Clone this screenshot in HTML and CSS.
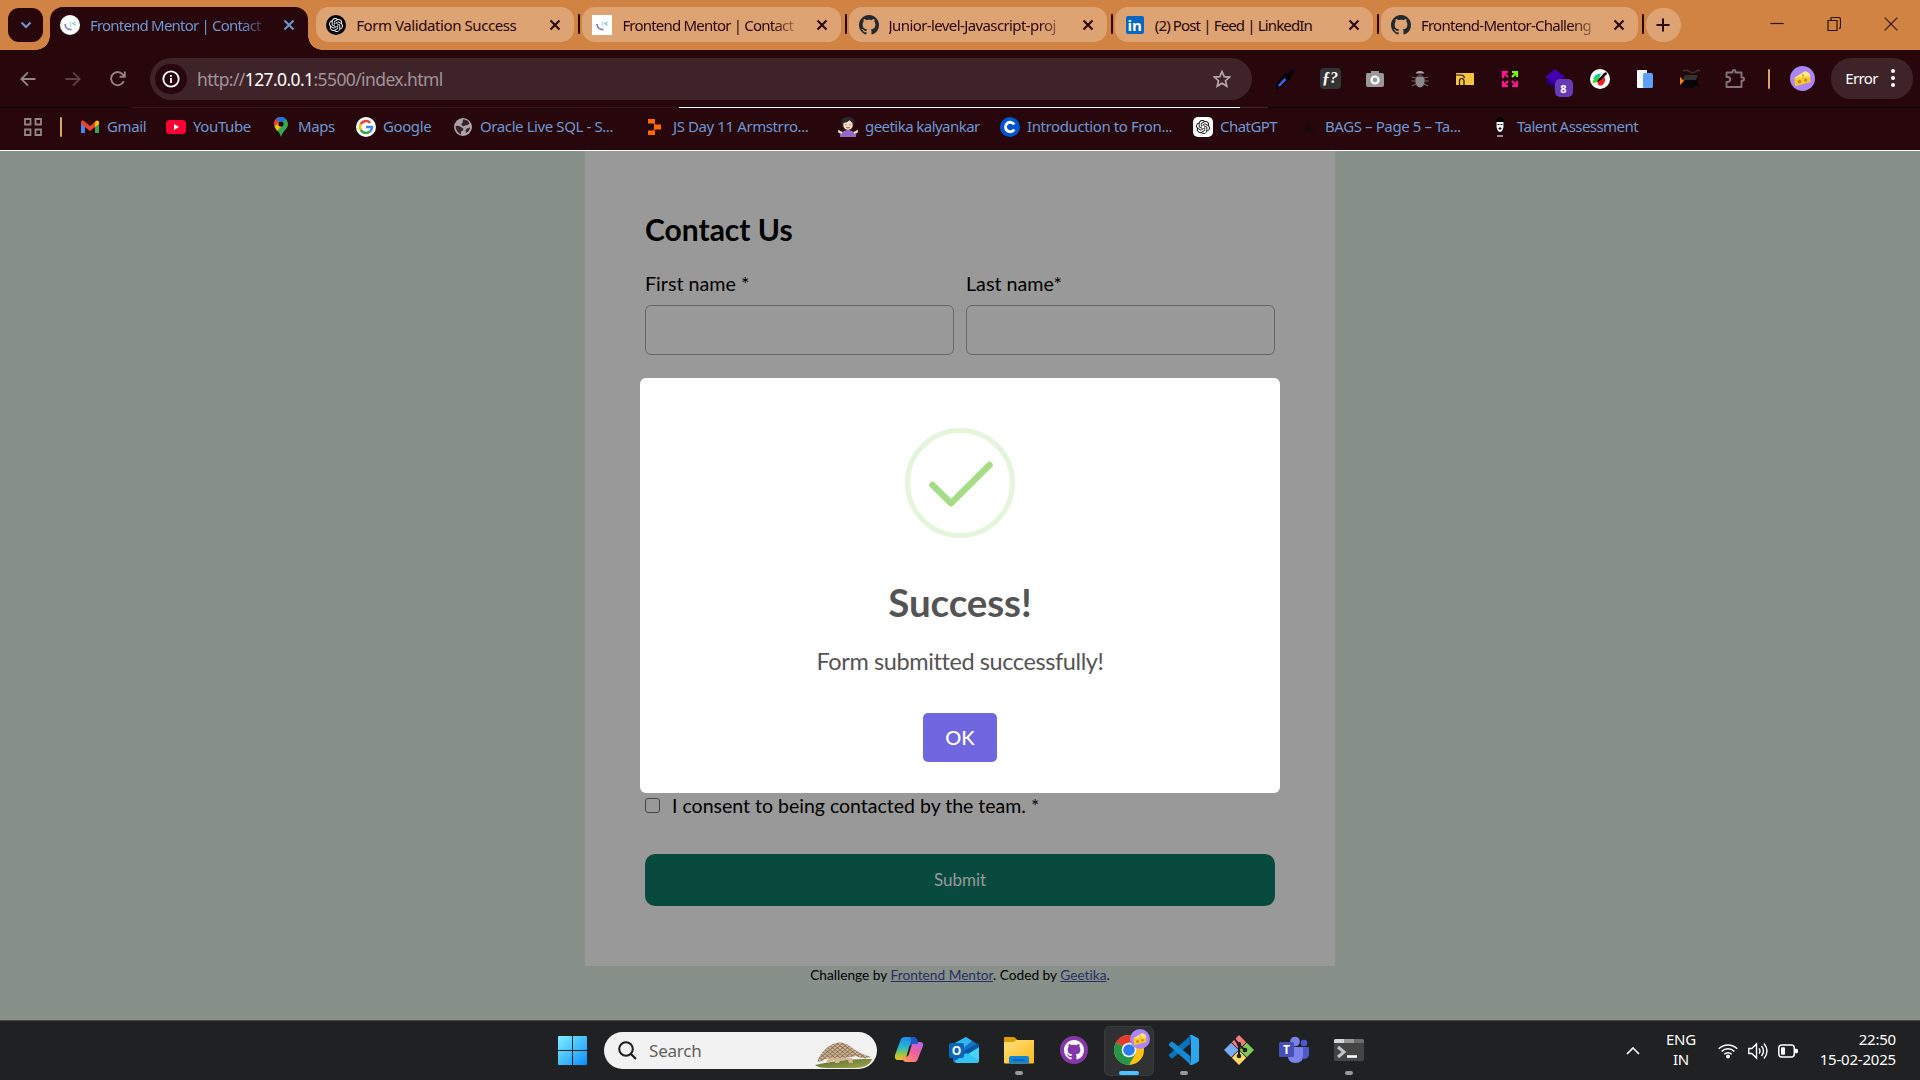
FILE: index.html
```html
<!DOCTYPE html>
<html lang="en">
<head>
<meta charset="utf-8">
<title>Frontend Mentor | Contact form</title>
<link rel="stylesheet" href="styles.css">
</head>
<body>
<svg class="defs" aria-hidden="true">
  <defs>
    <linearGradient id="win" x1="0" y1="0" x2="1" y2="1"><stop offset="0" stop-color="#7df0ff"/><stop offset="1" stop-color="#0c8ffb"/></linearGradient>
    <linearGradient id="cop1" x1="0" y1="0" x2="0" y2="1"><stop offset="0" stop-color="#1b8af0"/><stop offset=".45" stop-color="#26b8d0"/><stop offset=".75" stop-color="#9bc83c"/><stop offset="1" stop-color="#f5c02a"/></linearGradient>
    <linearGradient id="cop2" x1="1" y1="0" x2="0" y2="1"><stop offset="0" stop-color="#b067f0"/><stop offset=".5" stop-color="#f0609c"/><stop offset="1" stop-color="#ffa552"/></linearGradient>
    <linearGradient id="fold" x1="0" y1="0" x2="1" y2="1"><stop offset="0" stop-color="#ffe07a"/><stop offset="1" stop-color="#fbb91c"/></linearGradient>
    <linearGradient id="grass" x1="0" y1="0" x2="1" y2="1"><stop offset="0" stop-color="#4c6b2c"/><stop offset="1" stop-color="#a9a552"/></linearGradient>
    <pattern id="scales" width="5" height="4" patternUnits="userSpaceOnUse"><rect width="5" height="4" fill="#a98d6c"/><path d="M0 0q2.500 5 5 0M-2.500 2q2.500 5 5 0M2.500 2q2.500 5 5 0" fill="#cbb597" stroke="#75593d" stroke-width=".6"/></pattern>
  </defs>
  <symbol id="close" viewBox="0 0 12 12"><path d="M1.500 1.500l9 9M10.500 1.500l-9 9" stroke="currentColor" stroke-width="2" fill="none"/></symbol>
  <symbol id="fm" viewBox="0 0 20 20"><path d="M5 9c.3 3.500 2.800 5.700 6.500 5.600" fill="none" stroke="#7b7dc4" stroke-width="1.600"/><path d="M10.500 6.500v5" stroke="#a9dfe6" stroke-width="1.300"/><path d="M15.500 7l-2.700 1.600 2.700 1.700" fill="none" stroke="#6fc9d4" stroke-width="1.200"/></symbol>
  <symbol id="github" viewBox="0 0 16 16"><path fill="currentColor" d="M8 0C3.580 0 0 3.580 0 8c0 3.540 2.290 6.530 5.470 7.590.4.070.55-.17.55-.38 0-.19-.01-.82-.01-1.490-2.010.37-2.530-.49-2.690-.94-.09-.23-.48-.94-.82-1.130-.28-.15-.68-.52-.01-.53.63-.01 1.080.58 1.230.82.72 1.210 1.870.87 2.330.66.070-.52.28-.87.51-1.070-1.780-.2-3.640-.89-3.640-3.950 0-.87.31-1.590.82-2.150-.08-.2-.36-1.020.08-2.120 0 0 .67-.21 2.200.82.64-.18 1.320-.27 2-.27s1.360.09 2 .27c1.530-1.040 2.200-.82 2.200-.82.44 1.100.16 1.920.08 2.120.51.56.82 1.270.82 2.150 0 3.070-1.870 3.750-3.650 3.950.29.25.54.73.54 1.480 0 1.070-.01 1.930-.01 2.200 0 .21.15.46.55.38A8.010 8.010 0 0 0 16 8c0-4.420-3.580-8-8-8z"/></symbol>
  <symbol id="openai" viewBox="0 0 24 24"><path fill="currentColor" d="M22.2819 9.8211a5.9847 5.9847 0 0 0-.5157-4.9108 6.0462 6.0462 0 0 0-6.5098-2.9A6.0651 6.0651 0 0 0 4.9807 4.1818a5.9847 5.9847 0 0 0-3.9977 2.9 6.0462 6.0462 0 0 0 .7427 7.0966 5.98 5.98 0 0 0 .511 4.9107 6.051 6.051 0 0 0 6.5146 2.9001A5.9847 5.9847 0 0 0 13.2599 24a6.0557 6.0557 0 0 0 5.7718-4.2058 5.9894 5.9894 0 0 0 3.9977-2.9001 6.0557 6.0557 0 0 0-.7475-7.0729zm-9.022 12.6081a4.4755 4.4755 0 0 1-2.8764-1.0408l.1419-.0804 4.7783-2.7582a.7948.7948 0 0 0 .3927-.6813v-6.7369l2.020 1.1686a.071.071 0 0 1 .038.052v5.5826a4.504 4.504 0 0 1-4.4945 4.4944zm-9.6607-4.1254a4.4708 4.4708 0 0 1-.5346-3.0137l.142.0852 4.783 2.7582a.7712.7712 0 0 0 .7806 0l5.8428-3.3685v2.3324a.0804.0804 0 0 1-.0332.0615L9.740 19.9502a4.4992 4.4992 0 0 1-6.1408-1.6464zM2.3408 7.8956a4.485 4.485 0 0 1 2.3655-1.9728V11.600a.7664.7664 0 0 0 .3879.6765l5.8144 3.3543-2.0201 1.1685a.0757.0757 0 0 1-.071 0l-4.8303-2.7865A4.504 4.504 0 0 1 2.3408 7.872zm16.5963 3.8558L13.1038 8.364 15.1192 7.200a.0757.0757 0 0 1 .071 0l4.8303 2.7913a4.4944 4.4944 0 0 1-.6765 8.1042v-5.6772a.79.79 0 0 0-.407-.667zm2.0107-3.0231l-.142-.0852-4.7735-2.7818a.7759.7759 0 0 0-.7854 0L9.409 9.2297V6.8974a.0662.0662 0 0 1 .0284-.0615l4.8303-2.7866a4.4992 4.4992 0 0 1 6.6802 4.660zM8.3065 12.863l-2.020-1.1638a.0804.0804 0 0 1-.038-.0567V6.0742a4.4992 4.4992 0 0 1 7.3757-3.4537l-.142.0805L8.704 5.459a.7948.7948 0 0 0-.3927.6813zm1.0976-2.3654l2.602-1.4998 2.6069 1.4998v2.9994l-2.5974 1.4997-2.6067-1.4997Z"/></symbol>
  <symbol id="cheese" viewBox="0 0 24 24"><circle cx="12" cy="12" r="12" fill="#ab84f5"/><path d="M4 11.500L14.500 5q4.500 1 5 5.500v5L5 19.500z" fill="#f8c72e"/><path d="M4 11.500L14.500 5q4.500 1 5 5z" fill="#ffe884"/><circle cx="9" cy="15" r="1.700" fill="#c98a12"/><circle cx="15" cy="13.500" r="1.600" fill="#c98a12"/><circle cx="12.500" cy="9" r="1.200" fill="#dca528"/></symbol>
</svg>

<header class="browser">
  <div class="tabstrip">
    <button class="tab-search" aria-label="Search tabs"><svg width="12" height="8" viewBox="0 0 12 8"><path d="M1.500 1.500L6 6l4.500-4.500" fill="none" stroke="currentColor" stroke-width="2"/></svg></button>
    <div class="tab active"><span class="fav round"><svg><use href="#fm"/></svg></span><span class="title t-fm">Frontend Mentor | Contact</span><svg class="x"><use href="#close"/></svg></div>
    <div class="tab"><span class="fav dark"><svg><use href="#openai"/></svg></span><span class="title t-form">Form Validation Success</span><svg class="x"><use href="#close"/></svg></div>
    <div class="tab"><span class="fav white"><svg><use href="#fm"/></svg></span><span class="title t-fm">Frontend Mentor | Contact</span><svg class="x"><use href="#close"/></svg></div>
    <div class="tab"><span class="fav gh"><svg><use href="#github"/></svg></span><span class="title t-js">Junior-level-Javascript-proj</span><svg class="x"><use href="#close"/></svg></div>
    <div class="tab"><span class="fav li">in</span><span class="title t-li">(2) Post | Feed | LinkedIn</span><svg class="x"><use href="#close"/></svg></div>
    <div class="tab last"><span class="fav gh"><svg><use href="#github"/></svg></span><span class="title t-ch">Frontend-Mentor-Challeng</span><svg class="x"><use href="#close"/></svg></div>
    <button class="new-tab" aria-label="New tab"><svg width="14" height="14" viewBox="0 0 14 14"><path d="M7 .5v13M.5 7h13" stroke="currentColor" stroke-width="2"/></svg></button>
    <div class="window-buttons">
      <svg viewBox="0 0 14 14"><path d="M.5 6.500h13" stroke="#2b1508" stroke-width="1.200"/></svg>
      <svg viewBox="0 0 14 14"><path d="M1 3.500h9v10H1zM4 3V1.500q0-1 1-1h6.500q2 0 2 2V10q0 1.200-1.500 1.500" fill="none" stroke="#2b1508" stroke-width="1.200"/></svg>
      <svg viewBox="0 0 14 14"><path d="M.7.7l12.600 12.600M13.300.7L.7 13.300" stroke="#2b1508" stroke-width="1.200"/></svg>
    </div>
  </div>

  <div class="toolbar">
    <div class="nav">
      <svg viewBox="0 0 16 16"><path d="M15.500 8h-14M8 1.300L1.300 8 8 14.700" fill="none" stroke="#958487" stroke-width="1.900"/></svg>
      <svg viewBox="0 0 16 16"><path d="M.5 8h14M8 1.300L14.700 8 8 14.700" fill="none" stroke="#594145" stroke-width="1.900"/></svg>
      <svg viewBox="0 0 16 16"><path d="M13.800 10.200A6.600 6.600 0 1 1 12.700 3.300L14.600 5.200M14.800.5v5.300H9.500" fill="none" stroke="#958487" stroke-width="1.900"/></svg>
    </div>
    <div class="omnibox">
      <span class="info"><svg width="18" height="18" viewBox="0 0 18 18"><circle cx="9" cy="9" r="7.700" fill="none" stroke="#fff" stroke-width="1.800"/><path d="M9 8v5M9 4.900v1.800" stroke="#fff" stroke-width="1.800"/></svg></span>
      <span class="url">http://<b>127.0.0.1</b>:5500/index.html</span>
      <svg class="star" width="18" height="18" viewBox="0 0 18 18"><path d="M9 1.500l2.200 5.100 5.500.5-4.200 3.600 1.300 5.400L9 13.200l-4.800 2.900 1.300-5.400L1.300 7.100l5.500-.5z" fill="none" stroke="#b5a9ab" stroke-width="1.700"/></svg>
    </div>
    <div class="extensions">
      <span><svg viewBox="0 0 20 20"><path d="M1 17l1-4 9-9 5 5-9 8-4 3H1z" fill="#050306"/><path d="M3.500 15.500l6-6.500 2 2-6 6-2.500.5z" fill="#3c5fe0"/><path d="M9 5l2-1 2 1 3-4q3-1 3 2l-3 4 0 3-2 1z" fill="#050306"/></svg></span>
      <span class="fq">ƒ?</span>
      <span><svg viewBox="0 0 20 20"><path d="M2 4h4V2h8v2h3q2 0 2 2v10q0 2-2 2H3q-2 0-2-2V6q0-2 1-2z" fill="#999"/><circle cx="10" cy="11" r="3.500" fill="#999" stroke="#fff" stroke-width="2.200"/></svg></span>
      <span><svg viewBox="0 0 20 20"><path d="M6 4.500Q6 2 10 2t4 2.500z" fill="#aaa"/><ellipse cx="10" cy="12" rx="4.700" ry="6.500" fill="#8b8b8b"/><path d="M2 8l4 1M1.500 12h4M2 17l4-2M18 8l-4 1M18.500 12h-4M18 17l-4-2" stroke="#6d6668" stroke-width="1.200"/><path d="M5.500 7h9" stroke="#27070c"/></svg></span>
      <span><svg viewBox="0 0 20 20"><path d="M1 4h18v12H1z" fill="#f9c43d"/><path d="M1 6h5q3 0 3.500 3M4.500 16v-4q0-2.500 2.200-2.500T9 12v4" fill="none" stroke="#171717" stroke-width="1.200"/></svg></span>
      <span><svg viewBox="0 0 20 20" fill="none" stroke="#ff1493" stroke-width="2.200"><path d="M3 9V3h5M3 3l5 5M3 12v5h5M3 17l5-5M12 17h5v-5M17 17l-5-5"/><path d="M12 3h5v5M17 3l-5 5" stroke="#76ff03"/></svg></span>
      <span class="badge-wrap"><svg viewBox="0 0 20 20"><path d="M0 13l10 6 8-6-8-7z" fill="#220080"/><path d="M0 8l10-8 10 8-10 7z" fill="#4300ad"/></svg><b class="badge">8</b></span>
      <span><svg viewBox="0 0 20 20"><circle cx="10" cy="10" r="10" fill="#fff"/><path d="M3 10Q6 4 11 5l-2 4z" fill="#0be"/><path d="M2.500 14Q3 8 10 6l-2 7z" fill="#2bdc22"/><path d="M7.500 14q0-6 6-7 4 4-1 9-4 2-5-2z" fill="#f51d1d"/><path d="M8 11l6-7q3-2 3 1l-6 6-4 2z" fill="#0b0b0b"/></svg></span>
      <span><svg viewBox="0 0 20 20"><path d="M2 2q0-1 1-1h9v18H3q-1 0-1-1z" fill="#f4f8ff"/><rect x="8" y="4" width="10" height="15" rx="1.500" fill="#5b9ff8"/></svg></span>
      <span><svg viewBox="0 0 20 20"><path d="M0 8l5 3-5 5z" fill="#fa7b17"/><path d="M4 7h12l4-2-3 8 3 5-4-1-3 2H2l2-8-3-2z" fill="#070505"/><path d="M5 6h13l-2 5H2z" fill="#343131"/><path d="M3 2q4-2 7 1 4 2 8-2l2 1" fill="none" stroke="#393235" stroke-width="1.500"/></svg></span>
      <span><svg viewBox="0 0 20 20"><path d="M1.500 3.500h6v-1a1.500 1.500 0 0 1 3 0v1h6v5h1a1.600 1.600 0 0 1 0 3.200h-1v6.300h-15V13h1.200a2.500 2.500 0 0 0 0-5H1.500z" fill="none" stroke="#817477" stroke-width="1.900" stroke-linejoin="round"/></svg></span>
    </div>
    <i class="divider"></i>
    <svg class="avatar"><use href="#cheese"/></svg>
    <button class="error">Error<svg width="4" height="18" viewBox="0 0 4 18"><g fill="#fff"><circle cx="2" cy="2" r="2"/><circle cx="2" cy="9" r="2"/><circle cx="2" cy="16" r="2"/></g></svg></button>
  </div>
  <div class="hairline"><i></i><i></i><i></i><i></i><i></i></div>

  <nav class="bookmarks">
    <svg class="apps" viewBox="0 0 18 18"><path d="M1 1h5.500v5.500H1zM11.500 1H17v5.500h-5.500zM1 11.500h5.500V17H1zM11.500 11.500H17V17h-5.500z" fill="none" stroke="#958487" stroke-width="1.800"/></svg>
    <i class="divider"></i>
    <a class="bm"><svg viewBox="0 0 20 20"><path d="M1 5v11h4V8z" fill="#4285f4"/><path d="M19 5v11h-4V8z" fill="#34a853"/><path d="M1 5q0-2 2.500-1.500L10 9l6.500-5.500Q19 3 19 5v2l-9 7-9-7z" fill="#ea4335"/><path d="M15 5v5l4-3V5q-1-2.500-4 0z" fill="#fbbc04"/></svg><span>Gmail</span></a>
    <a class="bm"><svg viewBox="0 0 20 20"><rect y="3" width="20" height="14" rx="3.500" fill="#ff0033"/><path d="M8 7l5 3-5 3z" fill="#fff"/></svg><span>YouTube</span></a>
    <a class="bm"><svg viewBox="0 0 20 20"><path d="M10 0a7 7 0 0 0-7 7c0 5 5 6 7 13 2-7 7-8 7-13a7 7 0 0 0-7-7z" fill="#34a853"/><path d="M3.200 5A7 7 0 0 1 10 0l3 .7L5 10Q3 8 3.200 5z" fill="#ea4335"/><path d="M5 2q4-4 10 0L10 7z" fill="#1a73e8"/><path d="M3.500 9.500L10 4v6l-4 4z" fill="#fbbc04"/><circle cx="10" cy="7" r="2.600" fill="#27070c"/></svg><span>Maps</span></a>
    <a class="bm"><svg viewBox="0 0 20 20"><circle cx="10" cy="10" r="10" fill="#fff"/><g fill="none" stroke-width="2.600"><path d="M14.200 5.800A6 6 0 0 0 4.700 7.200" stroke="#ea4335"/><path d="M4.700 7.200a6 6 0 0 0 0 5.600" stroke="#fbbc04"/><path d="M4.700 12.800a6 6 0 0 0 9.200 1.700" stroke="#34a853"/><path d="M13.900 14.500A6 6 0 0 0 16 10h-6" stroke="#4285f4"/></g></svg><span>Google</span></a>
    <a class="bm"><svg viewBox="0 0 20 20"><circle cx="10" cy="10" r="9" fill="#a8a3ab"/><path d="M2.500 9q4-1 6 1.500 2.500.5 1.500 3l-2 1v3Q3 15 2.500 9zM10 2.500q5 0 6.500 4-2 2.500-3.500 1.500-2 2-4 .5-1.500-1.500.5-2.500zM12.500 13q1.500-2.500 4.500-2.500-.5 3.500-4 5.500z" fill="#3a2328"/></svg><span>Oracle Live SQL - S...</span></a>
    <a class="bm"><svg viewBox="0 0 20 20"><path d="M2 2h7v4.500H2zM8 7.500h7v5H8zM2 13.500h7V18H2z" fill="#ff6a00"/><path d="M7 6l3 2.500M7 14l3-2.500" stroke="#ff6a00"/></svg><span>JS Day 11 Armstrro...</span></a>
    <a class="bm tight"><svg viewBox="0 0 20 20"><path d="M3 6q0-6 7-6t6.500 6L15 11H5z" fill="#24292c"/><ellipse cx="10" cy="8" rx="4.700" ry="5" fill="#fbdcc8"/><path d="M4.500 6q5 0 7-3l4 4V3l-4-2.500L5 1z" fill="#24292c"/><path d="M2 20v-3q4-4 8-4t8 4v3z" fill="#936bc6"/><path d="M0 14l4 2M20 14l-4 2" stroke="#fbdcc8" stroke-width="2.200"/><path d="M8.500 10.500q1.500 1 3 0M7.500 7.800h1M11.500 7.800h1" stroke="#7b3f38" fill="none"/></svg><span>geetika kalyankar</span></a>
    <a class="bm"><svg viewBox="0 0 20 20"><circle cx="10" cy="10" r="10" fill="#0056d2"/><path d="M14.200 7.500a4.700 4.700 0 1 0 0 5" fill="none" stroke="#fff" stroke-width="2.900"/></svg><span>Introduction to Fron...</span></a>
    <a class="bm tight"><svg viewBox="0 0 20 20"><rect width="20" height="20" rx="5" fill="#fff"/><g color="#111"><use href="#openai" x="3" y="3" width="14" height="14"/></g></svg><span>ChatGPT</span></a>
    <a class="bm"><svg viewBox="0 0 20 20"><path d="M10 4v12M7 15l3-5M4 11h4M12 8v5M12 14h5" fill="none" stroke="#0d0d0d" stroke-width="1.200"/></svg><span>BAGS – Page 5 – Ta...</span></a>
    <a class="bm tight"><svg viewBox="0 0 20 20"><path d="M6 5q0-5 4-5t4 5v4q0 6-4 6T6 9z" fill="#050505"/><path d="M6.500 5h7v5q-1 5-3.500 5t-3.500-5z" fill="#f5f5f5"/><path d="M7.500 7.500h2M10.500 7.500h2M9 11h2v1H9z" stroke="#111" fill="#111"/><path d="M7 19h6" stroke="#b9b9b9" stroke-width="1.500"/></svg><span>Talent Assessment</span></a>
  </nav>
</header>

<main class="page">
  <form class="card">
    <h1>Contact Us</h1>
    <div class="names">
      <label>First name *<input type="text"></label>
      <label>Last name*<input type="text"></label>
    </div>
    <div class="consent"><i class="box"></i><span>I consent to being contacted by the team. *</span></div>
    <button class="submit" type="button">Submit</button>
  </form>
  <p class="credit">Challenge by <a>Frontend Mentor</a>. Coded by <a>Geetika</a>.</p>
  <section class="dialog" role="dialog">
    <svg class="tick" width="110" height="110" viewBox="0 0 110 110"><circle cx="55" cy="55" r="52.500" fill="none" stroke="#e4f5db" stroke-width="5"/><path d="M27.500 57L46 75.300 84.500 37" fill="none" stroke="#a5dc86" stroke-width="6.500" stroke-linecap="round" stroke-linejoin="round"/></svg>
    <h2>Success!</h2>
    <p>Form submitted successfully!</p>
    <button class="ok" type="button">OK</button>
  </section>
</main>

<footer class="taskbar">
  <div class="start"><svg width="29" height="29" viewBox="0 0 29 29"><path d="M0 1q0-1 1-1h13v14H0zM15 0h13q1 0 1 1v13H15zM0 15h14v14H1q-1 0-1-1zM15 15h14v13q0 1-1 1H15z" fill="url(#win)"/></svg></div>
  <div class="search">
    <svg width="19" height="19" viewBox="0 0 19 19"><circle cx="8" cy="8" r="6.800" fill="none" stroke="#1e1e1e" stroke-width="2"/><path d="M13 13l5 5" stroke="#1e1e1e" stroke-width="2.200"/></svg>
    <span>Search</span>
    <svg class="pangolin" width="58" height="28" viewBox="0 0 58 28"><path d="M0 24q28-7 57-6-3 9-18 9H12Q3 27 0 24z" fill="url(#grass)"/><path d="M13 17h24l1 5h-4l-1-3-8 1-1 2h-4l-1-3-5 3h-3z" fill="#d5b995"/><path d="M2 21q3-9 11-15 12-9 23 0 7 6 20 10-7 3-15-1-12 3-27 2-5 1-7 3z" fill="url(#scales)"/></svg>
  </div>
  <div class="apps-row">
    <div class="app"><svg viewBox="0 0 30 30"><path d="M7 4q1-2 4-2h8q3 0 4 3l1 4h-5q-3 0-4 3l-3 11q-1 2-4 2H4q-4 0-3-5z" fill="url(#cop1)"/><path d="M23 26q-1 1-3 1h-8q-2 0-3-2l-1-3h3q3 0 4-3l3-10q1-2 3-2h5q4 0 3 4z" fill="url(#cop2)"/><path d="M19 2q3 0 4 3l1 4h-5q-2 0-3 1l1-5q0-3-3-3z" fill="#2456c8"/></svg></div>
    <div class="app"><svg viewBox="0 0 30 30"><path d="M4 9L17 2l13 8v15q0 3-3 3H7q-3 0-3-3z" fill="#1373c4"/><path d="M4 9L17 2l6 4L8 18z" fill="#31b7f1"/><path d="M30 12v13q0 3-3 3H9q-2 0-3-2z" fill="#42d3f5"/><path d="M5 22l24-14 1 4-22 14z" fill="#0757a5"/><path d="M6 26l11-8 13 7q0 3-3 3H9q-2 0-3-2z" fill="#31c5f3"/><rect y="8" width="15" height="15" rx="2" fill="#0a66b8"/><text x="7.500" y="20" class="glyph-o">O</text></svg></div>
    <div class="app open"><svg viewBox="0 0 30 30"><path d="M0 3q0-1 1-1h8q2 0 3 1.500L14 6v4H0z" fill="#df9b08"/><path d="M0 7h10l2-2h18v22q0 1.500-1 1.500H1q-1 0-1-1.500z" fill="url(#fold)"/><path d="M5 28.500V23q0-2 2-2h16q2 0 2 2v5.500z" fill="#1084d7"/><path d="M9 25h12" stroke="#064b8a"/></svg></div>
    <div class="app"><svg viewBox="0 0 30 30"><circle cx="15" cy="15" r="14" fill="#8536a8"/><g color="#fff"><use href="#github" x="5" y="5" width="20" height="20"/></g></svg></div>
    <div class="app current"><svg viewBox="0 0 30 30"><circle cx="15" cy="15" r="15" fill="#fbc116"/><path d="M15 15L2 7.500A15 15 0 0 1 28 7.500H15z" fill="#e33b2e"/><path d="M15 15L2 7.500A15 15 0 0 0 15 30l6.500-11.200z" fill="#269547"/><circle cx="15" cy="15" r="7.300" fill="#fff"/><circle cx="15" cy="15" r="5.800" fill="#2a7cf0"/></svg><svg class="mini"><use href="#cheese"/></svg></div>
    <div class="app open"><svg viewBox="0 0 30 30"><path d="M22 0l-1 9L4 23q-1 1-2 0l-2-2q-.5-1 0-1.500z" fill="#0a72bd"/><path d="M22 30l-1-9L4 7Q3 6 2 7L0 9q-.5 1 0 1.500z" fill="#168bd5"/><path d="M20 1q1-1 3-1l6 3q1 .5 1 2v20q0 1.500-1 2l-6 3q-2 0-3-1 2 0 2-2V3q0-2-2-2z" fill="#29a8f0"/></svg></div>
    <div class="app"><svg viewBox="0 0 30 30"><path d="M15 0l7.200 7.200L15 14.500 7.800 7.200z" fill="#f57c7c"/><path d="M7.200 7.800l7.300 7.200-7.300 7.200L0 15z" fill="#78aaf5"/><path d="M22.800 7.800L30 15l-7.200 7.200-7.300-7.200z" fill="#80c957"/><path d="M15 15.500l7.200 7.300L15 30l-7.200-7.200z" fill="#ffd968"/><path d="M10 3l5 7v13M15 10l6 5" fill="none" stroke="#202020" stroke-width="2"/><g fill="#202020"><circle cx="15" cy="9" r="2.200"/><circle cx="15" cy="21" r="2.300"/><circle cx="21" cy="15" r="2.300"/></g></svg></div>
    <div class="app"><svg viewBox="0 0 30 30"><circle cx="16" cy="6.500" r="4.800" fill="#7b83eb"/><circle cx="25" cy="8" r="3.300" fill="#5059c9"/><path d="M20 12h9q1 0 1 1v6q0 5-6 5z" fill="#5059c9"/><path d="M9 12h14q1 0 1 1v8q0 7-7.500 7T9 21z" fill="#7b83eb"/><rect y="7" width="15" height="15" rx="1.500" fill="#4650b8"/><text x="7.500" y="18.500" class="glyph-t">T</text></svg></div>
    <div class="app open"><svg viewBox="0 0 30 30"><rect y="4" width="30" height="22" rx="1.500" fill="#444"/><path d="M0 8V5.500Q0 4 1.500 4H10v4z" fill="#d5d5d5"/><path d="M10 4h10v4H10z" fill="#999"/><path d="M20 4h8.500Q30 4 30 5.500V8H20z" fill="#6b6b6b"/><path d="M4 12l6 5-6 5" fill="none" stroke="#c4c4c4" stroke-width="3"/><path d="M13 21.500h10" stroke="#fff" stroke-width="2.600"/></svg></div>
  </div>
  <div class="tray">
    <svg class="chev" width="14" height="8" viewBox="0 0 14 8"><path d="M1 7l6-6 6 6" fill="none" stroke="#fff" stroke-width="1.700"/></svg>
    <div class="lang">ENG<br>IN</div>
    <svg class="wifi" width="20" height="16" viewBox="0 0 20 16"><g fill="none" stroke="#fff" stroke-width="1.500"><path d="M.8 5.800a13 13 0 0 1 18.400 0M3.600 8.500a9 9 0 0 1 12.800 0M6.300 11.200a5.200 5.200 0 0 1 7.400 0"/></g><circle cx="10" cy="13.500" r="1.900" fill="#fff"/></svg>
    <svg class="sound" width="20" height="18" viewBox="0 0 20 18"><g fill="none" stroke="#fff" stroke-width="1.400"><path d="M.8 6.500h3L8.500 2v14l-4.700-4.500h-3z"/><path d="M11 6.300q2 2.700 0 5.400M13.500 4q4 5 0 10M16 1.500q6 7.500 0 15"/></g></svg>
    <svg class="battery" width="20" height="14" viewBox="0 0 20 14"><rect x=".8" y="1" width="15.500" height="12" rx="3" fill="none" stroke="#fff" stroke-width="1.500"/><rect x="3" y="3.300" width="4" height="7.400" rx="1" fill="#fff"/><path d="M17 4.800h1.500q1.500 0 1.500 1.500v1.400q0 1.500-1.500 1.500H17z" fill="#fff"/></svg>
    <div class="clock">22:50<br>15-02-2025</div>
  </div>
</footer>
</body>
</html>
```
FILE: styles.css
```css
* { box-sizing: border-box; }
body {
  margin: 0;
  width: 1920px;
  height: 1080px;
  overflow: hidden;
  display: flex;
  flex-direction: column;
  font-family: "Noto Sans", "Open Sans", sans-serif;
}
button { border: 0; padding: 0; font: inherit; display: flex; align-items: center; justify-content: center; }
svg { display: block; flex: none; }
.defs { width: 0; height: 0; position: absolute; }

/* Browser frame */
.browser { background: #27070c; height: 151px; border-bottom: 1px solid #fff; flex: none; }
.tabstrip { height: 50px; background: #d08343; display: flex; align-items: flex-start; gap: 8px; padding: 7px 0 0 8px; }
.tab-search { width: 35px; height: 34px; margin: 1px -1px 0 0; border-radius: 11px; background: #27070c; color: #6f97d2; }
.tab {
  width: 258.200px; height: 35px; padding: 0 13px 0 10px; border-radius: 13px; position: relative;
  background: #dda372; color: #27070c; display: flex; align-items: center; flex: none;
}
.tab.last { width: 257px; }
.tab:not(.active)::after { content: ""; position: absolute; left: calc(100% + 4px); top: 7px; width: 2px; height: 20px; border-radius: 1px; background: #27070c; }
.tab.active { height: 43px; padding-bottom: 8px; border-radius: 13px 13px 0 0; background: #27070c; color: #6f97d2; }
.tab.active::before, .tab.active::after { content: ""; position: absolute; bottom: 0; width: 14px; height: 14px; }
.tab.active::before { left: -14px; background: radial-gradient(circle at 0 0, transparent 13.5px, #27070c 14px); }
.tab.active::after { left: 100%; background: radial-gradient(circle at 100% 0, transparent 13.5px, #27070c 14px); }
.fav { width: 20px; height: 20px; margin-right: 10px; flex: none; display: flex; align-items: center; justify-content: center; }
.fav svg { width: 20px; height: 20px; }
.fav.round { border-radius: 50%; background: #fff; }
.fav.white { background: #fff; }
.fav.dark { border-radius: 50%; background: #000; color: #fff; }
.fav.dark svg { width: 14px; height: 14px; }
.fav.gh { color: #24292f; }
.fav.li { width: 18px; height: 18px; margin: 0 11px 0 1px; border-radius: 2px; background: #0a66c2; color: #fff; font: 700 15px/18px "Open Sans", sans-serif; }
.title { width: 178px; white-space: nowrap; font-size: 15px; line-height: 22px; letter-spacing: -.42px; }
.t-fm { letter-spacing: -.8px; }
.t-js { letter-spacing: -.6px; }
.t-li { letter-spacing: -.85px; }
.t-ch { letter-spacing: -.75px; }
.t-fm, .t-js, .t-ch {
  -webkit-mask-image: linear-gradient(90deg, #000 150px, rgba(0, 0, 0, .15) 177px);
  mask-image: linear-gradient(90deg, #000 150px, rgba(0, 0, 0, .15) 177px);
}
.x { width: 12px; height: 12px; margin-left: auto; }
.new-tab { width: 35px; height: 34px; margin: 1px 0 0 0; border-radius: 17px; background: #dda372; color: #27070c; }
.window-buttons { margin: 10px 22px 0 auto; display: flex; gap: 43px; }
.window-buttons svg { width: 14px; height: 14px; }

.toolbar { height: 57px; display: flex; align-items: center; }
.nav { width: 150px; padding-left: 20px; display: flex; gap: 29px; }
.nav svg { width: 16px; height: 16px; }
.omnibox { width: 1102px; height: 42px; border-radius: 21px; background: #3e2328; display: flex; align-items: center; padding: 0 21px 0 5px; }
.info { width: 32px; height: 30px; border-radius: 15px; background: #27070c; display: flex; align-items: center; justify-content: center; margin-right: 10px; }
.url { font-size: 17.500px; line-height: 26px; letter-spacing: -.6px; color: #a1949a; }
.url b { font-weight: 400; color: #fff; }
.star { margin-left: auto; }
.extensions { display: flex; margin-left: 10.500px; }
.extensions > span { width: 45px; height: 24px; display: flex; align-items: center; justify-content: center; }
.extensions svg { width: 20px; height: 20px; }
.extensions .fq { width: 21px; height: 21px; margin: 1px 12px; border-radius: 4px; background: #333; color: #fff; font: italic 700 16px "Liberation Serif", serif; }
.badge-wrap { position: relative; }
.badge { position: absolute; left: 22px; top: 12px; width: 18px; height: 18px; border-radius: 5px; background: #673ab7; color: #fff; font-size: 11px; line-height: 19px; text-align: center; }
.divider { width: 2px; height: 20px; border-radius: 1px; background: #e0a26c; flex: none; }
.toolbar .divider { margin-left: 10px; }
.avatar { width: 25px; height: 25px; margin: 0 16px 0 20px; }
.error { width: 82px; height: 41px; border-radius: 20px; background: #3e2328; color: #fff; font-size: 15px; letter-spacing: -.6px; gap: 13px; padding: 0 3px 2px 0; }
.hairline { display: grid; grid-template-columns: 131px 548px 561px 28px 1fr; height: 1px; }
.hairline i { background: #050102; }
.hairline i:nth-child(2) { background: #35191f; }
.hairline i:nth-child(3) { background: #fff; }
.hairline i:nth-child(4) { background: #3e2b31; }

.bookmarks { height: 42px; padding: 0 0 5px 24px; display: grid; grid-template-columns: 36px 20px 86px 105px 85px 97px 193px 192px 162px 193px 105px 192px 1fr; align-items: center; }
.apps { width: 18px; height: 18px; }
.bm { display: flex; align-items: center; gap: 7px; color: #6f97d2; white-space: nowrap; font-size: 15px; line-height: 22px; letter-spacing: -.4px; }
.bm.tight { letter-spacing: -.55px; }
.bm svg { width: 20px; height: 20px; }
.bm span { margin-top: -2px; }

/* Page content */
.page { height: 869px; background: #87918a; position: relative; font-family: Lato, sans-serif; font-variant-ligatures: none; display: flex; flex-direction: column; align-items: center; flex: none; }
.card { width: 750px; height: 815px; padding: 59px 60px 60px; background: #999; color: #000; display: flex; flex-direction: column; }
.card h1 { margin: 0; font-size: 30px; line-height: 38px; font-weight: 700; }
.names { display: grid; grid-template-columns: 1fr 1fr; gap: 12px; margin-top: 22px; }
.names label { font-size: 19.700px; line-height: 28px; display: flex; flex-direction: column; gap: 7px; }
.names input { height: 50px; border: 1px solid #666; border-radius: 6px; background: transparent; }
.consent { margin-top: auto; display: flex; align-items: center; gap: 12px; font-size: 19.500px; line-height: 28px; }
.box { width: 15px; height: 15px; margin-top: -2px; border: 1px solid #464646; border-radius: 3px; }
.submit { margin-top: 34px; height: 52px; padding-bottom: 2px; border-radius: 10px; background: #084b3e; color: #999; font-size: 17px; flex: none; }
.credit { margin: 0; font-size: 13.700px; line-height: 17px; }
.credit a { color: #2a2f62; text-decoration: underline; }
.dialog { position: absolute; left: 640px; top: 227px; width: 640px; height: 415px; padding-top: 50px; border-radius: 6px; background: #fff; color: #545454; display: flex; flex-direction: column; align-items: center; }
.dialog h2 { margin: 39px 0 0; font-size: 38.500px; line-height: 50px; font-weight: 700; letter-spacing: -.1px; }
.dialog p { margin: 18px 0 0; font-size: 23.500px; line-height: 32px; letter-spacing: -.4px; }
.ok { width: 74px; height: 49px; padding-bottom: 2px; margin-top: 36px; border-radius: 5px; background: #7066e0; color: #fff; font-size: 20px; font-weight: 500; }

/* Taskbar */
.taskbar { height: 60px; background: #202122; border-top: 1px solid #454a48; display: flex; align-items: center; color: #fff; flex: none; }
.start { margin-left: 558px; width: 46px; }
.search { width: 273px; height: 37px; margin-top: -1px; border-radius: 19px; background: #f2f2f2; color: #606060; display: flex; align-items: center; padding: 0 4px 0 14px; font-size: 17px; letter-spacing: -.2px; }
.search span { margin-left: 12px; }
.pangolin { margin: 9px 0 0 auto; }
.apps-row { display: flex; margin-left: 4px; }
.app { width: 55px; height: 50px; display: flex; align-items: center; justify-content: center; position: relative; }
.app > svg { width: 30px; height: 30px; margin-top: -1px; }
.app.open::after, .app.current::after { content: ""; position: absolute; bottom: 1px; left: 50%; width: 8px; height: 4px; margin-left: -4px; border-radius: 2px; background: #999; }
.app.current::after { width: 20px; margin-left: -10px; background: #4cc2ff; }
.app.current { width: 50px; margin: 0 2.500px; border-radius: 6px; background: #2f3133; box-shadow: inset 0 0 0 1px #383a3c; }
.app .mini { position: absolute; left: 26px; top: 4px; width: 20px; height: 20px; }
.glyph-o, .glyph-t { fill: #fff; font: 700 12px "Open Sans", sans-serif; text-anchor: middle; }
.tray { margin-left: auto; padding-right: 24px; display: flex; align-items: center; font-size: 15px; line-height: 20px; letter-spacing: -.2px; }
.lang { width: 50px; margin: -3px 12px 0 16px; text-align: center; }
.wifi { margin-right: 10px; }
.sound { margin-right: 10px; }
.clock { width: 98px; margin-top: -4px; text-align: right; white-space: nowrap; }
```
